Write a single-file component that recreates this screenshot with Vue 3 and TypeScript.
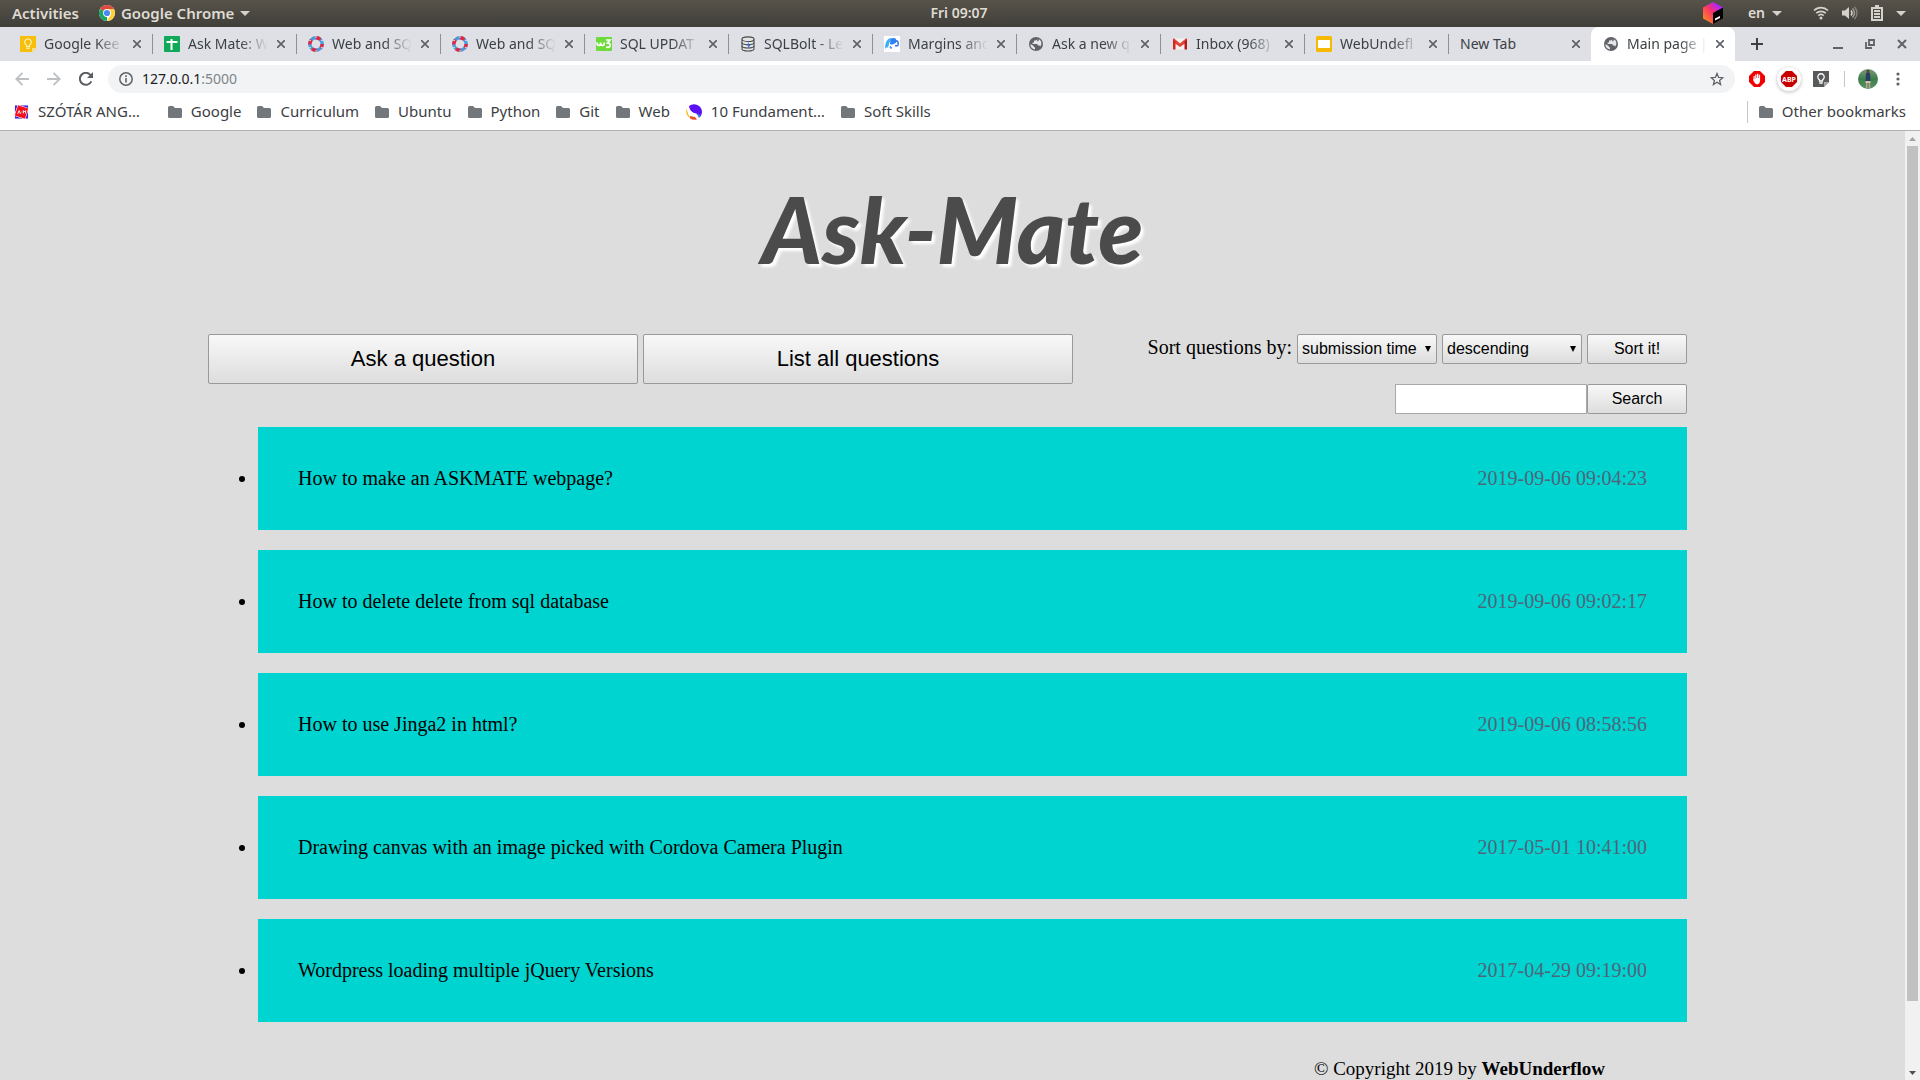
<script setup lang="ts">
import { ref } from 'vue'

interface Tab { title: string; icon: string; active?: boolean }
interface Bookmark { title: string; icon: string }
interface Question { title: string; time: string }

const tabs: Tab[] = [
  { title: 'Google Kee', icon: 'keep' },
  { title: 'Ask Mate: W', icon: 'sheets' },
  { title: 'Web and SQ', icon: 'canvas' },
  { title: 'Web and SQ', icon: 'canvas' },
  { title: 'SQL UPDAT', icon: 'w3' },
  { title: 'SQLBolt - Le', icon: 'db' },
  { title: 'Margins and', icon: 'mdn' },
  { title: 'Ask a new q', icon: 'globe' },
  { title: 'Inbox (968)', icon: 'gmail' },
  { title: 'WebUndefl', icon: 'slides' },
  { title: 'New Tab', icon: '' },
  { title: 'Main page |', icon: 'globe', active: true },
]

const bookmarks: Bookmark[] = [
  { title: 'SZÓTÁR ANG…', icon: 'dict' },
  { title: 'Google', icon: 'folder' },
  { title: 'Curriculum', icon: 'folder' },
  { title: 'Ubuntu', icon: 'folder' },
  { title: 'Python', icon: 'folder' },
  { title: 'Git', icon: 'folder' },
  { title: 'Web', icon: 'folder' },
  { title: '10 Fundament…', icon: 'swirl' },
  { title: 'Soft Skills', icon: 'folder' },
]

const questions: Question[] = [
  { title: 'How to make an ASKMATE webpage?', time: '2019-09-06 09:04:23' },
  { title: 'How to delete delete from sql database', time: '2019-09-06 09:02:17' },
  { title: 'How to use Jinga2 in html?', time: '2019-09-06 08:58:56' },
  { title: 'Drawing canvas with an image picked with Cordova Camera Plugin', time: '2017-05-01 10:41:00' },
  { title: 'Wordpress loading multiple jQuery Versions', time: '2017-04-29 09:19:00' },
]

const orderBy = ref('submission time')
const direction = ref('descending')
const search = ref('')
</script>

<template>
  <div class="desktop">
    <header class="topbar">
      <div class="top-left">
        <button class="top-item">Activities</button>
        <button class="top-item app-menu">
          <svg width="16" height="16" viewBox="0 0 16 16">
            <circle cx="8" cy="8" r="8" fill="#fff" />
            <path d="M8 8L1.07 4A8 8 0 0 1 14.93 4z" fill="#dd4b3e" />
            <path d="M8 8L1.07 4A8 8 0 0 0 8 16z" fill="#1da462" />
            <path d="M8 4h6.9A8 8 0 0 1 8 16l3.500-6z" fill="#fdd03b" />
            <circle cx="8" cy="8" r="3.9" fill="#fff" />
            <circle cx="8" cy="8" r="3.1" fill="#4a8af4" />
          </svg>
          <span>Google Chrome</span>
          <svg width="10" height="5" viewBox="0 0 10 5"><path d="M0 0h10L5 5z" fill="#d4d2cc" /></svg>
        </button>
      </div>
      <button class="top-item clock">Fri 09:07</button>
      <div class="top-right">
        <svg class="toolbox" width="20" height="22" viewBox="0 0 20 22">
          <defs>
            <linearGradient id="boxGrad" x1="0" y1="1" x2="1" y2="0">
              <stop offset="0.1" stop-color="#ff8a1e" /><stop offset=".5" stop-color="#fb3267" /><stop offset=".8" stop-color="#b025ff" />
            </linearGradient>
          </defs>
          <path d="M10 0l10 5.5v11L10 22 0 16.500V5.500z" fill="url(#boxGrad)" />
          <path d="M10 11l10-5.500v11L10 22z" fill="#000" />
          <path d="M12 16.500l5-2.500v2l-5 2.500z" fill="#fff" />
        </svg>
        <button class="top-item lang">en
          <svg width="10" height="5" viewBox="0 0 10 5"><path d="M0 0h10L5 5z" fill="#d4d2cc" /></svg>
        </button>
        <button class="top-item status" aria-label="System menu">
          <svg width="16" height="14" viewBox="0 0 16 14" fill="none" stroke="#d4d2cc" stroke-width="1.700">
            <path d="M1 4.500a10 10 0 0 1 14 0" /><path d="M3.200 7.200a7 7 0 0 1 9.600 0" /><path d="M5.300 9.600a4 4 0 0 1 5.400 0" />
            <circle cx="8" cy="12" r="1.500" fill="#d4d2cc" stroke="none" />
          </svg>
          <svg width="16" height="14" viewBox="0 0 16 14">
            <path d="M0 4.500h3L7 1v12L3 9.500H0z" fill="#d4d2cc" />
            <path d="M9 4.500q2 2.500 0 5" fill="none" stroke="#d4d2cc" stroke-width="1.500" />
            <path d="M10.500 2.500q4 4.500 0 9" fill="none" stroke="#a5a39d" stroke-width="1.400" />
            <path d="M12.500 .8q5 6.200 0 12.400" fill="none" stroke="#83817b" stroke-width="1.400" />
          </svg>
          <svg width="12" height="16" viewBox="0 0 12 16">
            <path d="M4 0h4v2h4v14H0V2h4zM2 4v10h8V4z" fill="#d4d2cc" fill-rule="evenodd" />
            <path d="M3 5h6v2H3zM3 8h6v2H3zM3 11h6v2H3z" fill="#d4d2cc" />
          </svg>
          <svg width="10" height="5" viewBox="0 0 10 5"><path d="M0 0h10L5 5z" fill="#d4d2cc" /></svg>
        </button>
      </div>
    </header>

    <nav class="tabstrip">
      <div v-for="(tab, i) in tabs" :key="i" class="tab" :class="{ active: tab.active, before: i === tabs.length - 2 }">
        <svg v-if="tab.icon === 'keep'" class="fav" viewBox="0 0 16 16">
          <path d="M0 0h16v12l-4 4H0z" fill="#f5bf0b" /><path d="M12 16v-4h4z" fill="#fbdf7c" />
          <path d="M6.500 10.500V9.200a3.300 3.300 0 1 1 3 0v1.300z" fill="none" stroke="#fff3c4" stroke-width="1.100" /><path d="M6.300 12.200h3.400" stroke="#fff" />
        </svg>
        <svg v-else-if="tab.icon === 'sheets'" class="fav" viewBox="0 0 16 16">
          <rect width="16" height="16" rx="1" fill="#0fa958" /><path d="M2.500 6h11M7.500 3v11" stroke="#fff" stroke-width="2" />
        </svg>
        <svg v-else-if="tab.icon === 'canvas'" class="fav" viewBox="0 0 16 16" fill="none" stroke-width="3.400">
          <circle cx="8" cy="8" r="6.200" stroke="#4a9bdb" />
          <circle cx="8" cy="8" r="6.200" stroke="#e2233f" stroke-dasharray="4.870 4.870" stroke-dashoffset="1" />
          <path d="M8 0v2M15 4l-2 1M15 12l-2-1M8 16v-2M1 12l2-1M1 4l2 1" stroke="#dee1e6" stroke-width="1" />
        </svg>
        <svg v-else-if="tab.icon === 'w3'" class="fav" viewBox="0 0 16 16">
          <rect y="1" width="16" height="14" rx="1" fill="#6fda3c" />
          <path d="M1 6.500q0 3 1.800 3t1.700-3q0 3 1.900 3t1.900-3M10 4h4l-2.500 3q3 0 2.700 2.500-.6 2.500-4.200 1.500" fill="none" stroke="#fff" stroke-width="1.700" />
        </svg>
        <svg v-else-if="tab.icon === 'db'" class="fav" viewBox="0 0 16 16" fill="#e4e4e4" stroke="#4a4a4a" stroke-width="1.100">
          <path d="M2 3.200v9.600c0 3 12 3 12 0V3.200" /><ellipse cx="8" cy="3.200" rx="6" ry="2.300" />
          <path d="M2 6.500c0 3 12 3 12 0M2 9.700c0 3 12 3 12 0" fill="none" /><path d="M9 6L6.500 9.500h2L7.500 13 10.500 9h-2z" fill="#2d6bd8" stroke="none" />
        </svg>
        <svg v-else-if="tab.icon === 'mdn'" class="fav" viewBox="0 0 16 16">
          <rect width="16" height="16" fill="#fff" />
          <path d="M1 13q0-9 5-11l2 1q-3 3-3 5l-1 4-1-1z" fill="#3cb0f7" />
          <path d="M7 2.500q5-1.500 5.500 2 .2 2.500-3 3.500-2 1-3.500 0 0-3 1-5.500z" fill="#3180f0" />
          <path d="M12 4.500q3 1 2 5M6 10.500l1.500 2M11 9.500q2 .5 3 0" fill="none" stroke="#2f78ea" stroke-width="1.500" />
        </svg>
        <svg v-else-if="tab.icon === 'globe'" class="fav" viewBox="0 0 16 16">
          <circle cx="8" cy="8" r="7" fill="#5f6368" />
          <path d="M9.500 2.600q-.3 1.700-2 2H6v1.800H4.600V8h4q1.400 0 1.400 1.600h1.200q.8 0 1 .8 1.400-1.500 1.200-3.600-.4-2.200-2.200-3.500-.5 2-1.700 2.200-.8-.8 0-2.900zM2.400 8q-.1 4.500 4.600 5.600v-2.200q-1.400-.2-1.400-1.500z" fill="#e4e6ea" />
        </svg>
        <svg v-else-if="tab.icon === 'gmail'" class="fav" viewBox="0 0 16 16">
          <path d="M1 2.500h14v11H1z" fill="#f4f0ee" /><path d="M1 2.500h1.200L8 7.500l5.800-5H15V6l-7 5-7-5z" fill="#e04338" />
          <path d="M1 3v10.500h2.500V6z" fill="#d3271d" /><path d="M15 3v10.500h-2.500V6z" fill="#b41a14" />
        </svg>
        <svg v-else-if="tab.icon === 'slides'" class="fav" viewBox="0 0 16 16">
          <rect width="16" height="16" rx="1.500" fill="#f5ba00" /><path d="M2 4h12v8H2z" fill="#fff" />
        </svg>
        <span class="tab-title" :class="{ faded: tab.icon }">{{ tab.title }}</span>
        <button class="close" aria-label="Close tab">
          <svg width="8" height="8" viewBox="0 0 8 8"><path d="M0 0l8 8M8 0L0 8" stroke="#5f6368" stroke-width="1.700" /></svg>
        </button>
      </div>
      <button class="new-tab" aria-label="New tab">
        <svg width="12" height="12" viewBox="0 0 12 12"><path d="M6 0v12M0 6h12" stroke="#3c4043" stroke-width="2" /></svg>
      </button>
      <div class="window-controls">
        <button aria-label="Minimize"><svg width="10" height="10" viewBox="0 0 10 10"><path d="M0 9h10" stroke="#5f6368" stroke-width="2" /></svg></button>
        <button aria-label="Restore"><svg width="10" height="10" viewBox="0 0 10 10"><path d="M4 1h5v5H4zM1 3v6h6" fill="none" stroke="#5f6368" stroke-width="1.800" /></svg></button>
        <button aria-label="Close"><svg width="10" height="10" viewBox="0 0 10 10"><path d="M1 1l8 8M9 1L1 9" stroke="#5f6368" stroke-width="2" /></svg></button>
      </div>
    </nav>

    <div class="toolbar">
      <button aria-label="Back"><svg width="14" height="14" viewBox="0 0 14 14"><path d="M14 7H1.500M7.500 .8L1.300 7l6.200 6.200" fill="none" stroke="#bdc0c3" stroke-width="1.800" /></svg></button>
      <button aria-label="Forward"><svg width="14" height="14" viewBox="0 0 14 14"><path d="M0 7h12.500M6.500 .8L12.700 7l-6.200 6.200" fill="none" stroke="#bdc0c3" stroke-width="1.800" /></svg></button>
      <button aria-label="Reload"><svg width="14" height="14" viewBox="0 0 14 14"><path d="M12.300 9.400A6 6 0 1 1 11.300 2.800L13 4.500" fill="none" stroke="#5a5d61" stroke-width="2" /><path d="M14 0v6H8z" fill="#5a5d61" /></svg></button>
      <div class="omnibox">
        <svg width="14" height="14" viewBox="0 0 14 14"><circle cx="7" cy="7" r="6.200" fill="none" stroke="#5f6368" stroke-width="1.500" /><path d="M7 6v4.500M7 3.300v1.700" stroke="#5f6368" stroke-width="1.600" /></svg>
        <span class="url"><span class="host">127.0.0.1</span>:5000</span>
        <button class="star" aria-label="Bookmark this page"><svg width="14" height="14" viewBox="0 0 14 14"><path d="M7 1.500l1.600 3.900 4.200.3-3.200 2.700 1 4.100L7 10.300l-3.600 2.200 1-4.100L1.200 5.700l4.200-.3z" fill="none" stroke="#5f6368" stroke-width="1.300" /></svg></button>
      </div>
      <div class="extensions">
        <button aria-label="AdBlock"><svg width="16" height="16" viewBox="0 0 16 16"><path d="M5 0h6l5 5v6l-5 5H5l-5-5V5z" fill="#f00000" /><path d="M4.500 8V5h1.200v3h.5V3.500h1.300V7H8V2.800h1.300V7h.5V3.800h1.300v6q-.4 3.400-3.100 3.700Q6 13.200 4 8.800z" fill="#fff" /></svg></button>
        <button class="abp" aria-label="Adblock Plus"><svg width="16" height="16" viewBox="0 0 16 16"><path d="M5 0h6l5 5v6l-5 5H5l-5-5V5z" fill="#c80000" /><text x="8" y="11" text-anchor="middle" font-size="7" font-weight="bold" fill="#fff">ABP</text></svg></button>
        <button aria-label="Google Keep"><svg width="16" height="16" viewBox="0 0 16 16"><path d="M0 0h16v11l-5 5H0z" fill="#58595b" /><path d="M11 16v-5h5z" fill="#aaa" /><path d="M6.500 10V8.800a3.200 3.200 0 1 1 3 0V10zM6.300 12h3.400" fill="none" stroke="#fff" stroke-width="1.300" /></svg></button>
        <span class="divider"></span>
        <button aria-label="Profile"><svg width="20" height="20" viewBox="0 0 20 20">
          <defs><linearGradient id="avatarGrad" x2="0" y2="1"><stop offset="0" stop-color="#7d9c7c" /><stop offset=".5" stop-color="#3d7d4c" /><stop offset="1" stop-color="#5c9468" /></linearGradient></defs>
          <circle cx="10" cy="10" r="10" fill="url(#avatarGrad)" /><path d="M8.500 1h3v3h-3z" fill="#5c4535" /><path d="M8 4h4l.5 8h-5z" fill="#273d63" /><path d="M7.500 12h5v2h-5z" fill="#cfc5a4" /><path d="M8.700 14v5M11.500 14v5" stroke="#b7a58d" stroke-width="1.500" />
        </svg></button>
        <button aria-label="Menu"><svg width="4" height="14" viewBox="0 0 4 14" fill="#5f6368"><circle cx="2" cy="2" r="1.600" /><circle cx="2" cy="7" r="1.600" /><circle cx="2" cy="12" r="1.600" /></svg></button>
      </div>
    </div>

    <nav class="bookmarks">
      <a v-for="mark in bookmarks" :key="mark.title" href="#" :class="['bookmark', mark.icon]">
        <svg v-if="mark.icon === 'folder'" width="14" height="12" viewBox="0 0 14 12"><path d="M0 1.500Q0 0 1.500 0H5l2 2h5.500Q14 2 14 3.500v7q0 1.500-1.500 1.500h-11Q0 12 0 10.500z" fill="#72777b" /></svg>
        <svg v-else-if="mark.icon === 'dict'" width="15" height="16" viewBox="0 0 16 16"><path d="M1 1h14v14H1z" fill="#3a23d8" /><path d="M4 0L16 4 12 16 0 12z" fill="#fff" /><path d="M4.300 .8L15.200 4.300 11.700 15.200 .8 11.700z" fill="#f4101c" /><path d="M4 10l1.500-3.500L7 10M8 8h1M10 9.500V6.500l1.200 1.500 1.200-1.500v3" fill="none" stroke="#fff" /></svg>
        <svg v-else width="16" height="16" viewBox="0 0 16 16"><path d="M3 2a8 8 0 0 1 13 6q0 2-1.500 4.500Q13 10 8 9 3.500 7 3 2z" fill="#5b10f5" /><path d="M10 9.500q4 .5 4.500 3l-1.500 1.500q-1-3-3-4.500z" fill="#2c7be8" /><path d="M1 4.500q-2 4 1 8l3 2q-4-5-4-10z" fill="#fab91c" /><path d="M4 12l5 1 2 2.500q-4 1-7-1z" fill="#e8552c" /></svg>
        <span>{{ mark.title }}</span>
      </a>
      <a href="#" class="bookmark other">
        <svg width="14" height="12" viewBox="0 0 14 12"><path d="M0 1.500Q0 0 1.500 0H5l2 2h5.500Q14 2 14 3.500v7q0 1.500-1.500 1.500h-11Q0 12 0 10.500z" fill="#72777b" /></svg>
        <span>Other bookmarks</span>
      </a>
    </nav>

    <div class="viewport">
      <div class="page">
        <h1>Ask-Mate</h1>
        <main>
          <div class="controls">
            <div class="actions">
              <button class="control big">Ask a question</button>
              <button class="control big">List all questions</button>
            </div>
            <div class="forms">
              <form class="sort" @submit.prevent>
                <label for="order-by">Sort questions by:</label>
                <span class="picker">
                  <select id="order-by" v-model="orderBy" class="control">
                    <option>submission time</option>
                    <option>title</option>
                  </select>
                  <svg width="6" height="6" viewBox="0 0 6 6"><path d="M0 0h6L3 6z" /></svg>
                </span>
                <span class="picker">
                  <select v-model="direction" class="control" aria-label="Direction">
                    <option>descending</option>
                    <option>ascending</option>
                  </select>
                  <svg width="6" height="6" viewBox="0 0 6 6"><path d="M0 0h6L3 6z" /></svg>
                </span>
                <button class="control submit">Sort it!</button>
              </form>
              <form class="search" @submit.prevent>
                <input v-model="search" type="text" aria-label="Search">
                <button class="control submit">Search</button>
              </form>
            </div>
          </div>
          <ul>
            <li v-for="question in questions" :key="question.title">
              <div class="question">
                <a href="#">{{ question.title }}</a>
                <time>{{ question.time }}</time>
              </div>
            </li>
          </ul>
        </main>
        <footer>© Copyright 2019 by <b>WebUnderflow</b></footer>
      </div>
      <div class="scrollbar">
        <svg width="15" height="15" viewBox="0 0 15 15"><path d="M4 10h7L7.500 6z" fill="#a3a3a3" /></svg>
        <div class="track"><div class="thumb"></div></div>
        <svg width="15" height="15" viewBox="0 0 15 15"><path d="M4 6h7l-3.500 4z" fill="#505050" /></svg>
      </div>
    </div>
  </div>
</template>

<style>
body { margin: 0; }
</style>

<style scoped>
.desktop {
  display: flex;
  flex-direction: column;
  height: 100vh;
  overflow: hidden;
  font-family: "Noto Sans", "Open Sans", sans-serif;
  font-size: 14px;
  color: #3c4043;
}
button {
  display: flex;
  align-items: center;
  justify-content: center;
  padding: 0;
  border: 0;
  background: none;
  font: inherit;
  color: inherit;
}
svg { flex: none; display: block; }

.topbar {
  display: grid;
  grid-template-columns: 1fr auto 1fr;
  align-items: center;
  height: 27px;
  flex: none;
  box-sizing: border-box;
  padding: 0 14px 1px 12px;
  background: linear-gradient(#57534b, #403e39);
}
.top-left, .top-right { display: flex; align-items: center; }
.top-left { gap: 20px; }
.top-left .top-item { font-size: 15px; }
.top-right { justify-content: flex-end; }
.top-item { font-weight: 600; line-height: 20px; color: #dfdbd2; }
.app-menu { gap: 6px; }
.toolbox { margin-right: 25px; }
.lang { gap: 7px; margin-right: 31px; }
.status { gap: 13px; }

.tabstrip {
  display: flex;
  height: 34px;
  flex: none;
  padding-left: 8px;
  background: #dee0e6;
}
.tab {
  display: flex;
  align-items: center;
  gap: 8px;
  flex: 0 1 144px;
  min-width: 0;
  box-sizing: border-box;
  padding: 0 10px 0 12px;
  position: relative;
}
.tab::after {
  content: "";
  position: absolute;
  right: -1px;
  top: 7px;
  width: 1px;
  height: 20px;
  background: #8d9095;
}
.tab.before { flex-basis: 143px; }
.tab.before::after, .tab.active::after { display: none; }
.tab.active { background: #fff; border-radius: 8px 8px 0 0; }
.fav { width: 16px; height: 16px; }
.tab-title {
  flex: 1;
  overflow: hidden;
  padding-bottom: 2px;
  white-space: nowrap;
}
.tab-title.faded { mask-image: linear-gradient(to right, #000 65%, transparent); }
.close { width: 10px; height: auto; }
.new-tab { width: 44px; }
.window-controls { display: flex; gap: 22px; margin-left: auto; padding-right: 13px; }

.toolbar {
  display: flex;
  align-items: center;
  height: 36px;
  flex: none;
  gap: 18px;
  padding: 0 20px 0 15px;
  background: #fff;
}
.omnibox {
  display: flex;
  align-items: center;
  flex: 1;
  height: 28px;
  gap: 9px;
  margin-left: -3px;
  padding: 0 11px;
  border-radius: 14px;
  background: #f1f3f4;
}
.url { padding-bottom: 1px; color: #80868b; }
.host { color: #202124; }
.star { margin-left: auto; }
.extensions { display: flex; align-items: center; gap: 15px; margin-left: -4px; }
.extensions button:nth-last-child(2) { margin: 0 3px 0 -2px; }
.abp { width: 18px; height: 18px; border-radius: 50%; box-shadow: 0 0 0 3px #fff, 0 1px 3px 4px #d4d4d4; }
.divider { width: 1px; height: 16px; background: #c4c6c9; }

.bookmarks {
  display: flex;
  align-items: center;
  box-sizing: border-box;
  height: 34px;
  flex: none;
  gap: 16px;
  padding: 0 14px 3px;
  border-bottom: 1px solid #b1b1b1;
  background: #fff;
  font-size: 15px;
  line-height: 20px;
}
.bookmark { display: flex; align-items: center; gap: 9px; color: inherit; text-decoration: none; white-space: nowrap; }
.bookmark span { padding-bottom: 2px; }
.bookmark.dict { margin-right: 12px; }
.bookmark.other { margin-left: auto; padding-left: 11px; border-left: 1px solid #c4c6c9; }

.viewport { display: flex; flex: 1; min-height: 0; background: #ddd; }
.page {
  flex: 1;
  font-family: "Liberation Serif", serif;
  font-size: 20px;
  line-height: 23px;
  color: #000;
}
h1 {
  margin: 0;
  padding: 38px 0 45px;
  font: italic 900 92px/120px Lato, sans-serif;
  text-align: center;
  color: #4b4b4b;
  text-shadow: 3px 3px 3px #fff;
}
main { padding: 0 218px 0 208px; }
.controls { display: flex; justify-content: space-between; }
.actions { display: flex; gap: 5px; flex: 0 1 865px; }
.control {
  box-sizing: border-box;
  border: 1px solid #999;
  border-radius: 2px;
  background: linear-gradient(#f8f8f8, #ddd);
  font-family: "Liberation Sans", Arial, sans-serif;
  font-size: 16px;
  color: #000;
  height: 30px;
  padding: 0 0 2px;
}
.big { flex: 1; height: 50px; font-size: 22px; }
.forms { display: flex; flex-direction: column; align-items: flex-end; gap: 20px; }
.sort { display: flex; gap: 5px; }
.sort label { padding-top: 2px; }
.picker { position: relative; }
.picker select { width: 140px; padding: 0 4px 2px; appearance: none; display: block; }
.picker svg { position: absolute; right: 6px; top: 12px; pointer-events: none; }
.submit { width: 100px; }
.search { display: flex; }
.search input {
  box-sizing: border-box;
  width: 192px;
  height: 30px;
  border: 1px solid #a9a9a9;
  padding: 0 4px;
  background: #fff;
  font: 16px "Liberation Sans", sans-serif;
}
ul { margin: 13px 0 0; padding: 0 0 0 50px; }
li { margin-bottom: 20px; }
.question { display: flex; justify-content: space-between; padding: 40px; background: #00d4d0; }
.question a { color: #000; text-decoration: none; }
time { color: #4e667a; }
footer { padding: 15px 300px 40px 0; font-size: 19px; text-align: right; }

.scrollbar { display: flex; flex-direction: column; width: 15px; background: #f1f1f1; }
.track { flex: 1; padding: 0 2px; }
.thumb { height: 93%; background: #c1c1c1; }
</style>
